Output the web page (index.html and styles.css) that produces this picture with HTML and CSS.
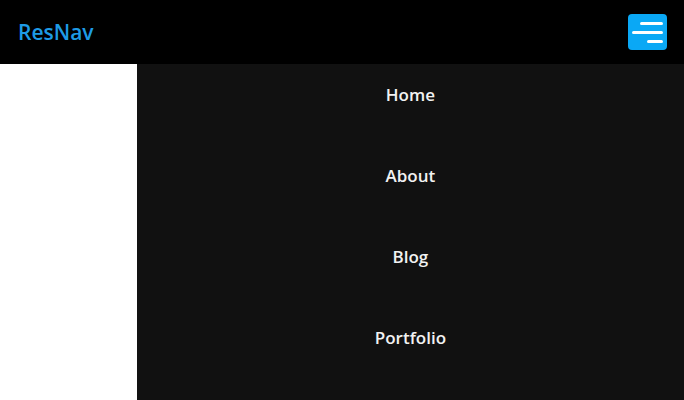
FILE: index.html
```html
<!DOCTYPE html>
<html lang="en">
<head>
<meta charset="utf-8">
<title>ResNav</title>
<link rel="stylesheet" href="styles.css">
</head>
<body>
<header class="header">
  <div class="logo">ResNav</div>
  <button class="burger" aria-label="Menu">
    <svg width="39" height="36" viewBox="0 0 39 36">
      <rect x="0" y="0" width="39" height="36" rx="4" fill="#0aa8f5"/>
      <line x1="13.5" y1="9.5" x2="33.5" y2="9.5" stroke="#fff" stroke-width="3" stroke-linecap="round"/>
      <line x1="5.5" y1="18.5" x2="33.5" y2="18.5" stroke="#fff" stroke-width="3" stroke-linecap="round"/>
      <line x1="20.5" y1="27.5" x2="33.5" y2="27.5" stroke="#fff" stroke-width="3" stroke-linecap="round"/>
    </svg>
  </button>
</header>
<main class="main">
  <nav class="menu">
    <ul class="menu-list">
      <li class="menu-item"><a href="#">Home</a></li>
      <li class="menu-item"><a href="#">About</a></li>
      <li class="menu-item"><a href="#">Blog</a></li>
      <li class="menu-item"><a href="#">Portfolio</a></li>
    </ul>
  </nav>
</main>
</body>
</html>
```
FILE: styles.css
```css
* { box-sizing: border-box; }
html, body { margin: 0; padding: 0; height: 100%; }
body {
  font-family: "Open Sans", "Noto Sans", sans-serif;
  background: #fff;
  overflow: hidden;
}
.header {
  height: 64px;
  background: #000;
  display: flex;
  align-items: center;
  justify-content: space-between;
  padding: 0 17px 0 18px;
}
.logo {
  color: #1e9be6;
  font-size: 21px;
  font-weight: 600;
  letter-spacing: 0;
}
.burger {
  border: 0;
  padding: 0;
  margin: 0;
  background: none;
  width: 39px;
  height: 36px;
  display: block;
}
.burger svg { display: block; }
.main {
  display: flex;
  justify-content: flex-end;
  height: calc(100% - 64px);
}
.menu {
  width: 80%;
  background: #111;
}
.menu-list {
  list-style: none;
  margin: 0;
  padding: 0;
}
.menu-item {
  text-align: center;
  height: 81px;
  padding-top: 19px;
}
.menu-item a {
  color: #f2f2f2;
  text-decoration: none;
  font-size: 17px;
  font-weight: 600;
  line-height: 24px;
}
```
